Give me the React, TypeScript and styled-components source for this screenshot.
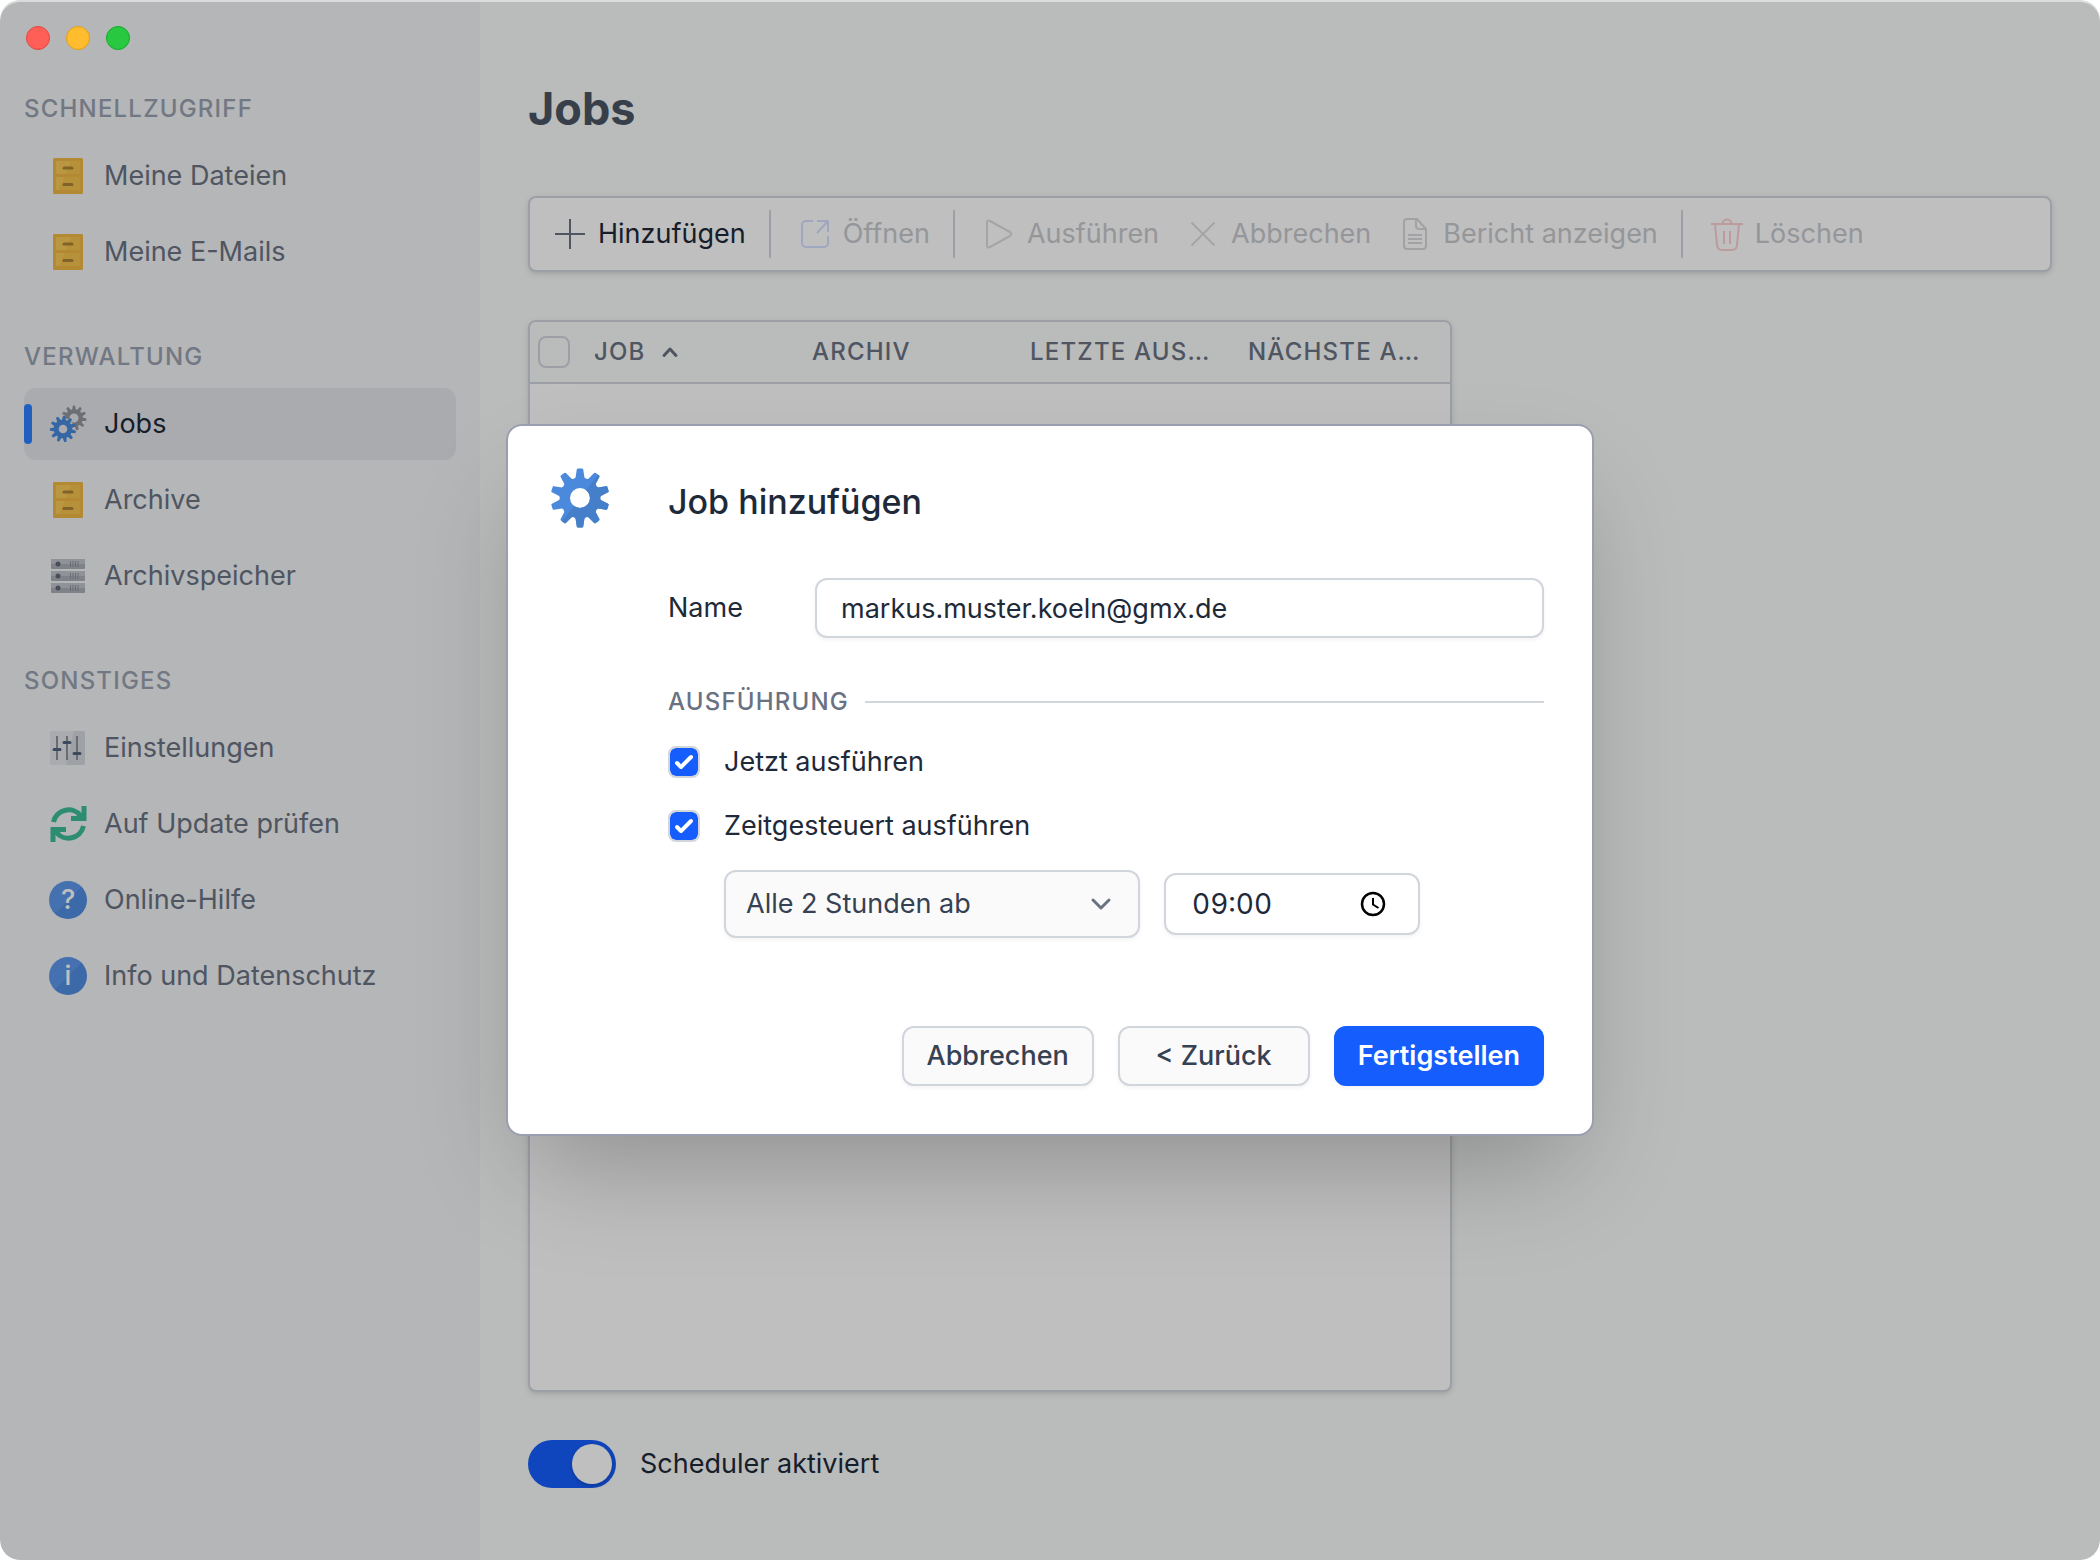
import React, { useId, useState } from "react";
import styled, { createGlobalStyle, css } from "styled-components";

const gray = {
  50: "#f8fafa",
  200: "#e2e4e9",
  300: "#d1d5dc",
  400: "#99a1af",
  500: "#6a7282",
  600: "#4a5565",
  700: "#364153",
  800: "#1e2939",
};
const blue = "#155dfc";

const GlobalStyle = createGlobalStyle`
  *, *::before, *::after { box-sizing: border-box; }
  body {
    margin: 0;
    background: #ffffff;
    color: ${gray[800]};
    font-family: Inter, "Liberation Sans", sans-serif;
    font-size: 27px;
    line-height: 40px;
  }
  button, input, select { font: inherit; color: inherit; margin: 0; }
  h1, h2, ul { margin: 0; padding: 0; }
  svg { display: block; flex: none; overflow: visible; }
`;

/* ---------- window ---------- */

const Window = styled.div`
  position: relative;
  display: flex;
  min-height: 100vh;
  border-radius: 20px;
  overflow: hidden;
  background: ${gray[50]};
`;

const TrafficLights = styled.div`
  position: absolute;
  z-index: 2;
  top: 26px;
  left: 26px;
  display: flex;
  gap: 16px;
`;

const Light = styled.button<{ $fill: string; $edge: string }>`
  width: 24px;
  height: 24px;
  padding: 0;
  border: 1px solid ${(p) => p.$edge};
  border-radius: 50%;
  background: ${(p) => p.$fill};
`;

/* ---------- sidebar ---------- */

const Sidebar = styled.nav`
  flex: none;
  display: flex;
  flex-direction: column;
  gap: 48px;
  width: 480px;
  padding: 88px 24px 48px;
  background: #f1f3f5;
`;

const SectionLabel = styled.h2`
  color: ${gray[400]};
  font-size: 24px;
  font-weight: 500;
  line-height: 42px;
  letter-spacing: 0.05em;
  text-transform: uppercase;
`;

const NavList = styled.ul`
  display: flex;
  flex-direction: column;
  gap: 4px;
  margin-top: 10px;
  list-style: none;
`;

const NavLink = styled.a<{ $active?: boolean }>`
  display: flex;
  align-items: center;
  gap: 16px;
  height: 72px;
  border-radius: 12px;
  color: ${gray[500]};
  text-decoration: none;
  white-space: nowrap;
  ${(p) =>
    p.$active &&
    css`
      background: ${gray[200]};
      color: ${gray[800]};
    `}
`;

const ActiveMark = styled.span<{ $active?: boolean }>`
  width: 8px;
  height: 40px;
  border-radius: 4px;
  background: ${(p) => (p.$active ? "#2b7fff" : "transparent")};
`;

const RoundGlyph = styled.span`
  display: grid;
  place-items: center;
  width: 38px;
  height: 38px;
  margin: 1px;
  border-radius: 50%;
  background: linear-gradient(135deg, #5d97ed 50%, #508ce0 50%);
  color: #ffffff;
  font-weight: 500;
  line-height: 38px;
`;

/* ---------- main ---------- */

const Main = styled.main`
  flex: 1;
  min-width: 0;
  display: flex;
  flex-direction: column;
  align-items: stretch;
  padding: 80px 48px 72px;
`;

const PageTitle = styled.h1`
  margin-bottom: 58px;
  color: ${gray[600]};
  font-size: 45px;
  font-weight: 700;
  line-height: 58px;
`;

const raised = css`
  border: 2px solid ${gray[300]};
  border-radius: 8px;
  background: #ffffff;
  box-shadow: 0 2px 6px rgba(0, 0, 0, 0.1), 0 2px 4px -2px rgba(0, 0, 0, 0.1);
`;

const Toolbar = styled.div`
  ${raised}
  display: flex;
  align-items: center;
  height: 76px;
  padding: 0 10px;
`;

const ToolButton = styled.button`
  display: flex;
  align-items: center;
  gap: 12px;
  height: 56px;
  padding: 0 14px;
  border: 0;
  background: none;
  white-space: nowrap;
  &:disabled {
    color: #c7c9ce;
  }
`;

const Separator = styled.span`
  width: 2px;
  height: 48px;
  margin: 0 14px 0 9px;
  background: ${gray[300]};
`;

const TablePanel = styled.div`
  ${raised}
  flex: 1;
  width: calc(100% - 600px);
  margin: 48px 0;
  overflow: hidden;
`;

const JobTable = styled.table`
  width: 100%;
  table-layout: fixed;
  border-collapse: collapse;
`;

const SelectHead = styled.th`
  width: 48px;
  padding: 0 0 0 8px;
`;

const Head = styled.th`
  padding: 0 16px;
  color: ${gray[500]};
  font-size: 24px;
  font-weight: 500;
  letter-spacing: 0.05em;
  text-align: left;
  white-space: nowrap;
`;

const HeadRow = styled.tr`
  height: 61px;
  background: ${gray[50]};
  border-bottom: 2px solid ${gray[300]};
`;

const SortHead = styled.span`
  display: flex;
  align-items: center;
  gap: 16px;
`;

const SwitchRow = styled.label`
  display: flex;
  align-items: center;
  gap: 24px;
  height: 48px;
`;

const Switch = styled.input`
  appearance: none;
  display: flex;
  justify-content: flex-start;
  width: 88px;
  height: 48px;
  padding: 4px;
  border-radius: 24px;
  background: ${gray[300]};
  &::before {
    content: "";
    width: 40px;
    height: 40px;
    border-radius: 50%;
    background: #ffffff;
    box-shadow: 0 2px 4px rgba(0, 0, 0, 0.2);
  }
  &:checked {
    justify-content: flex-end;
    background: ${blue};
  }
`;

/* ---------- check box ---------- */

const CheckFrame = styled.span`
  display: grid;
  width: 32px;
  height: 32px;
  & > * {
    grid-area: 1 / 1;
  }
  & > svg {
    pointer-events: none;
  }
`;

const CheckInput = styled.input`
  appearance: none;
  width: 32px;
  height: 32px;
  border: 2px solid ${gray[300]};
  border-radius: 8px;
  background-clip: padding-box;
  &:checked {
    background-color: ${blue};
  }
`;

/* ---------- dialog ---------- */

const Backdrop = styled.div`
  position: absolute;
  inset: 0;
  z-index: 1;
  display: grid;
  place-items: center;
  border-radius: 20px;
  background: rgba(0, 0, 0, 0.25);
  box-shadow: inset 0 2px 0 rgba(255, 255, 255, 0.5);
`;

const Dialog = styled.form`
  display: flex;
  align-items: flex-start;
  gap: 56px;
  width: 1088px;
  padding: 40px 48px 48px 40px;
  border: 2px solid #9a9fb0;
  border-radius: 16px;
  background: #ffffff;
  box-shadow: 0 50px 100px -24px rgba(0, 0, 0, 0.25);
`;

const DialogBody = styled.div`
  flex: 1;
  min-width: 0;
`;

const DialogTitle = styled.h2`
  padding: 16px 0;
  font-size: 34px;
  font-weight: 500;
  line-height: 40px;
`;

const NameRow = styled.div`
  display: grid;
  grid-template-columns: 147px 1fr;
  align-items: center;
  margin-top: 40px;
`;

const field = css`
  border: 2px solid ${gray[300]};
  border-radius: 12px;
  box-shadow: 0 2px 4px rgba(0, 0, 0, 0.05);
`;

const TextInput = styled.input`
  ${field}
  width: 100%;
  height: 60px;
  padding: 0 24px;
  background: #ffffff;
`;

const GroupLabel = styled.div`
  display: flex;
  align-items: center;
  gap: 16px;
  margin: 44px 0 20px;
  color: ${gray[500]};
  font-size: 24px;
  font-weight: 500;
  letter-spacing: 0.05em;
  &::after {
    content: "";
    flex: 1;
    height: 2px;
    background: ${gray[300]};
  }
`;

const CheckRow = styled.label`
  display: flex;
  align-items: center;
  gap: 24px;
  height: 40px;
  margin-bottom: 24px;
`;

const ScheduleRow = styled.div`
  display: flex;
  align-items: center;
  gap: 24px;
  padding-left: 56px;
`;

const SelectFrame = styled.div`
  display: grid;
  grid-template-columns: 1fr 78px;
  align-items: center;
  width: 416px;
  & > svg {
    grid-area: 1 / 2;
    justify-self: center;
    pointer-events: none;
  }
`;

const Select = styled.select`
  ${field}
  appearance: none;
  grid-area: 1 / 1 / 2 / 3;
  height: 68px;
  padding: 0 78px 0 20px;
  background: #fafafa;
  color: ${gray[700]};
`;

const TimeFrame = styled.div`
  ${field}
  display: flex;
  align-items: center;
  justify-content: space-between;
  width: 256px;
  height: 62px;
  padding: 0 30px 0 26px;
`;

const TimeInput = styled.input`
  width: 120px;
  padding: 0;
  border: 0;
  background: none;
  font-size: 28px;
  font-variant-numeric: tabular-nums;
`;

const ClockButton = styled.button`
  padding: 0;
  border: 0;
  background: none;
  color: #000000;
`;

const Actions = styled.div`
  display: flex;
  justify-content: flex-end;
  gap: 24px;
  margin-top: 88px;
`;

const ActionButton = styled.button<{ $primary?: boolean }>`
  ${field}
  min-width: 192px;
  height: 60px;
  padding: 0 22px;
  background: #fafafa;
  color: ${gray[700]};
  font-weight: 500;
  white-space: nowrap;
  ${(p) =>
    p.$primary &&
    css`
      border-color: ${blue};
      background: ${blue};
      color: #ffffff;
      font-weight: 600;
    `}
`;

/* ---------- icons ---------- */

function gearPath(cx: number, cy: number, outer: number, root: number, hole: number, teeth = 10, turn = 0) {
  const pt = (r: number, a: number) =>
    `${(cx + r * Math.sin(a)).toFixed(2)} ${(cy - r * Math.cos(a)).toFixed(2)}`;
  const step = (Math.PI * 2) / teeth;
  let d = "";
  for (let i = 0; i < teeth; i++) {
    const a = i * step + turn;
    d += `${i ? "L" : "M"}${pt(root, a - step * 0.34)}L${pt(outer * 0.97, a - step * 0.18)}`;
    d += `Q${pt(outer, a - step * 0.17)} ${pt(outer, a - step * 0.1)}L${pt(outer, a + step * 0.1)}`;
    d += `Q${pt(outer, a + step * 0.17)} ${pt(outer * 0.97, a + step * 0.18)}L${pt(root, a + step * 0.34)}`;
    d += `Q${pt(root * 0.93, a + step * 0.5)} ${pt(root, a + step * 0.66)}`;
  }
  return `${d}Z M${cx - hole} ${cy}a${hole} ${hole} 0 1 0 ${hole * 2} 0a${hole} ${hole} 0 1 0 ${-hole * 2} 0Z`;
}

const BigGear = () => {
  const id = useId();
  const d = gearPath(32, 32, 29.5, 21, 10);
  return (
    <svg width="64" height="64" viewBox="0 0 64 64" fillRule="evenodd" aria-hidden="true">
      <clipPath id={id}>
        <path d="M57 0H64V64H7Z" />
      </clipPath>
      <path d={d} fill="#4a89dc" />
      <path d={d} fill="#467fc9" clipPath={`url(#${id})`} />
    </svg>
  );
};

const GearsIcon = () => (
  <svg width="40" height="40" viewBox="0 0 40 40" fillRule="evenodd" aria-hidden="true">
    <path d={gearPath(26, 14, 12.5, 9, 4.5, 11, 0)} fill="#90959b" />
    <circle cx="15" cy="25" r="11" fill={gray[200]} />
    <path d={gearPath(15, 25, 13.2, 9.5, 4.3, 11, 0.1)} fill="#4a89dc" />
  </svg>
);

const CabinetIcon = () => (
  <svg width="40" height="40" viewBox="0 0 40 40" aria-hidden="true">
    <rect x="5" y="2" width="30" height="36" rx="1.5" fill="#f0b746" />
    <path d="M8 5h24v13H8zM8 21h24v13H8z" fill="#f8ca58" />
    <path d="M23 5h9v13H17.500zM16.500 21H32v13H11z" fill="#f4c04e" />
    <path d="M15 13v-1q0-1 1-1h8q1 0 1 1v1zM15 29.500v-1q0-1 1-1h8q1 0 1 1v1z" fill="#ae8434" stroke="#ae8434" />
  </svg>
);

const ServerIcon = () => (
  <svg width="40" height="40" viewBox="0 0 40 40" aria-hidden="true">
    {[3, 15, 27].map((y) => (
      <g key={y}>
        <rect x="3" y={y} width="34" height="10" rx="1" fill="#aaaeb7" />
        <rect x="3" y={y} width="34" height="5" rx="1" fill="#bfc3ca" />
        <circle cx="10" cy={y + 5} r="2.500" fill="#626a78" />
        <path d={`M22.500 ${y + 2}v6M25 ${y + 2}v6M27.500 ${y + 2}v6M30 ${y + 2}v6`} stroke="#8d929c" />
      </g>
    ))}
  </svg>
);

const SlidersIcon = () => (
  <svg width="40" height="40" viewBox="0 0 40 40" aria-hidden="true">
    <rect x="2" y="3" width="35" height="34" rx="2" fill="#e2e5ea" />
    <path d="M26 3h9q2 0 2 2v30q0 2-2 2H18z" fill="#d3d7de" />
    <path d="M9 8v24M19 8v24M29 8v24" stroke="#8b9098" strokeWidth="2" />
    <path d="M6 21.500h6M16 14.500h6M26 25.500h6" stroke="#51637c" strokeWidth="3" strokeLinecap="round" />
  </svg>
);

const RefreshIcon = () => (
  <svg width="40" height="40" viewBox="0 0 40 40" fill="none" aria-hidden="true">
    {[0, 180].map((turn) => (
      <g key={turn} transform={`rotate(${turn} 20.500 20)`}>
        <path d="M5.500 18A15.500 15.500 0 0 1 33 12" stroke="#3bbd97" strokeWidth="5" />
        <path d="M33.500 2H38.500V17H23V12H28L33.500 9Z" fill="#3bbd97" />
      </g>
    ))}
  </svg>
);

const ToolIcon = ({ stroke, children }: { stroke: string; children: React.ReactNode }) => (
  <svg
    width="32"
    height="32"
    viewBox="0 0 32 32"
    fill="none"
    stroke={stroke}
    strokeWidth="2"
    strokeLinejoin="round"
    aria-hidden="true"
  >
    {children}
  </svg>
);

/* ---------- parts ---------- */

type NavEntry = { label: string; icon: React.ReactNode; active?: boolean };

const sections: { title: string; items: NavEntry[] }[] = [
  {
    title: "Schnellzugriff",
    items: [
      { label: "Meine Dateien", icon: <CabinetIcon /> },
      { label: "Meine E-Mails", icon: <CabinetIcon /> },
    ],
  },
  {
    title: "Verwaltung",
    items: [
      { label: "Jobs", icon: <GearsIcon />, active: true },
      { label: "Archive", icon: <CabinetIcon /> },
      { label: "Archivspeicher", icon: <ServerIcon /> },
    ],
  },
  {
    title: "Sonstiges",
    items: [
      { label: "Einstellungen", icon: <SlidersIcon /> },
      { label: "Auf Update prüfen", icon: <RefreshIcon /> },
      { label: "Online-Hilfe", icon: <RoundGlyph aria-hidden="true">?</RoundGlyph> },
      { label: "Info und Datenschutz", icon: <RoundGlyph aria-hidden="true">i</RoundGlyph> },
    ],
  },
];

function CheckBox({ initial = false, label }: { initial?: boolean; label?: string }) {
  const [on, setOn] = useState(initial);
  return (
    <CheckFrame>
      <CheckInput type="checkbox" checked={on} aria-label={label} onChange={() => setOn(!on)} />
      {on && (
        <svg width="32" height="32" viewBox="0 0 16 16" fill="#ffffff" aria-hidden="true">
          <path d="M12.207 4.793a1 1 0 0 1 0 1.414l-5 5a1 1 0 0 1-1.414 0l-2-2a1 1 0 0 1 1.414-1.414L6.500 9.086l4.293-4.293a1 1 0 0 1 1.414 0z" />
        </svg>
      )}
    </CheckFrame>
  );
}

export default function App() {
  return (
    <>
      <GlobalStyle />
      <Window>
        <TrafficLights>
          <Light $fill="#ff5f57" $edge="#e2463f" aria-label="Schließen" />
          <Light $fill="#febc2e" $edge="#e1a116" aria-label="Minimieren" />
          <Light $fill="#28c840" $edge="#12ac28" aria-label="Vollbild" />
        </TrafficLights>

        <Sidebar>
          {sections.map((section) => (
            <section key={section.title}>
              <SectionLabel>{section.title}</SectionLabel>
              <NavList>
                {section.items.map((item) => (
                  <li key={item.label}>
                    <NavLink href="#" $active={item.active}>
                      <ActiveMark $active={item.active} />
                      {item.icon}
                      {item.label}
                    </NavLink>
                  </li>
                ))}
              </NavList>
            </section>
          ))}
        </Sidebar>

        <Main>
          <PageTitle>Jobs</PageTitle>
          <Toolbar role="toolbar">
            <ToolButton>
              <ToolIcon stroke={gray[500]}>
                <path d="M16 1v30M1 16h30" />
              </ToolIcon>
              Hinzufügen
            </ToolButton>
            <Separator />
            <ToolButton disabled>
              <ToolIcon stroke="#d5deff">
                <path d="M14 3H7a4 4 0 0 0-4 4v18a4 4 0 0 0 4 4h18a4 4 0 0 0 4-4v-7M18 3h11v11M29 3L18 15" />
              </ToolIcon>
              Öffnen
            </ToolButton>
            <Separator />
            <ToolButton disabled>
              <ToolIcon stroke="#dcdde0">
                <path d="M4 4.500V27.500q0 3 3 1.500L27 18q2.500-2 0-4L7 3Q4 1.500 4 4.500Z" />
              </ToolIcon>
              Ausführen
            </ToolButton>
            <ToolButton disabled>
              <ToolIcon stroke="#dcdde0">
                <path d="M4.500 4.500l23 23M27.500 4.500l-23 23" />
              </ToolIcon>
              Abbrechen
            </ToolButton>
            <ToolButton disabled>
              <ToolIcon stroke="#d8d9dd">
                <path d="M18 1H8a3 3 0 0 0-3 3v24a3 3 0 0 0 3 3h16a3 3 0 0 0 3-3V11ZM17 1v7a3 3 0 0 0 3 3h7M9 17h14M9 21h14M9 25h14" />
              </ToolIcon>
              Bericht anzeigen
            </ToolButton>
            <Separator />
            <ToolButton disabled>
              <ToolIcon stroke="#fbcfd1">
                <path d="M0 6h32M11.500 6a4.500 4.500 0 0 1 9 0M4 6l2 21q.5 5 5 5h10q4.500 0 5-5l2-21M13 13v13M19 13v13" />
              </ToolIcon>
              Löschen
            </ToolButton>
          </Toolbar>

          <TablePanel>
            <JobTable>
              <thead>
                <HeadRow>
                  <SelectHead>
                    <CheckBox label="Alle auswählen" />
                  </SelectHead>
                  <Head aria-sort="ascending">
                    <SortHead>
                      JOB
                      <svg width="16" height="10" viewBox="0 0 16 10" fill="none" stroke={gray[500]} strokeWidth="3" strokeLinecap="round" strokeLinejoin="round" aria-hidden="true">
                        <path d="M2 8.500L8 2l6 6.500" />
                      </svg>
                    </SortHead>
                  </Head>
                  <Head>ARCHIV</Head>
                  <Head>LETZTE AUS…</Head>
                  <Head>NÄCHSTE A…</Head>
                </HeadRow>
              </thead>
              <tbody />
            </JobTable>
          </TablePanel>

          <SwitchRow>
            <Switch type="checkbox" role="switch" defaultChecked />
            Scheduler aktiviert
          </SwitchRow>
        </Main>

        <Backdrop>
          <Dialog role="dialog" aria-labelledby="dialog-title" onSubmit={(e) => e.preventDefault()}>
            <BigGear />
            <DialogBody>
              <DialogTitle id="dialog-title">Job hinzufügen</DialogTitle>
              <NameRow>
                <label htmlFor="job-name">Name</label>
                <TextInput id="job-name" type="text" defaultValue="markus.muster.koeln@gmx.de" />
              </NameRow>
              <GroupLabel>AUSFÜHRUNG</GroupLabel>
              <CheckRow>
                <CheckBox initial />
                Jetzt ausführen
              </CheckRow>
              <CheckRow>
                <CheckBox initial />
                Zeitgesteuert ausführen
              </CheckRow>
              <ScheduleRow>
                <SelectFrame>
                  <Select aria-label="Intervall" defaultValue="2h">
                    <option value="2h">Alle 2 Stunden ab</option>
                  </Select>
                  <svg width="20" height="12" viewBox="0 0 20 12" fill="none" stroke={gray[500]} strokeWidth="3" strokeLinecap="round" strokeLinejoin="round" aria-hidden="true">
                    <path d="M2 2l8 8 8-8" />
                  </svg>
                </SelectFrame>
                <TimeFrame>
                  <TimeInput type="text" inputMode="numeric" aria-label="Startzeit" defaultValue="09:00" />
                  <ClockButton type="button" aria-label="Uhrzeit wählen">
                    <svg width="30" height="30" viewBox="0 0 30 30" fill="none" stroke="currentColor" aria-hidden="true">
                      <circle cx="15" cy="15" r="11" strokeWidth="2.500" />
                      <path d="M15 9v6.500l5.500 3.500" strokeWidth="2" />
                    </svg>
                  </ClockButton>
                </TimeFrame>
              </ScheduleRow>
              <Actions>
                <ActionButton type="button">Abbrechen</ActionButton>
                <ActionButton type="button">&lt; Zurück</ActionButton>
                <ActionButton type="submit" $primary>
                  Fertigstellen
                </ActionButton>
              </Actions>
            </DialogBody>
          </Dialog>
        </Backdrop>
      </Window>
    </>
  );
}
